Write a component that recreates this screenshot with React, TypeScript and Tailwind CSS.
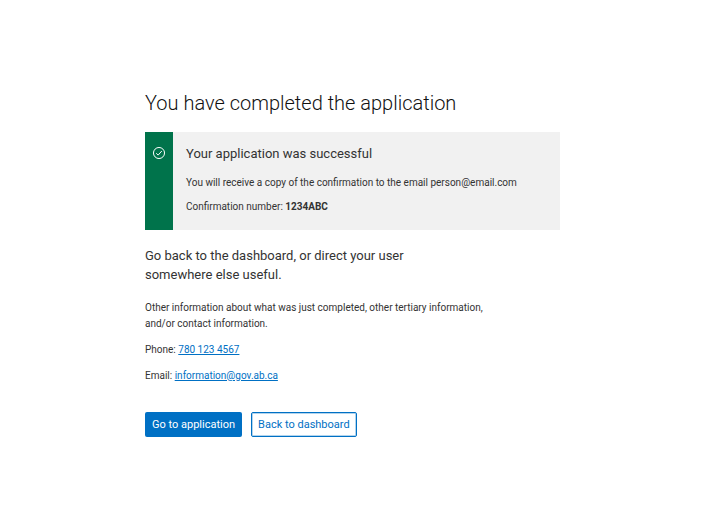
import React from "react";

function SuccessIcon() {
  return (
    <svg
      viewBox="0 0 24 24"
      className="size-[14px] text-white"
      fill="none"
      stroke="currentColor"
      strokeWidth="1.7"
      aria-hidden="true"
    >
      <circle cx="12" cy="12" r="9.5" />
      <path d="M7.3 12.4l3.2 3.2 6.3-7" />
    </svg>
  );
}

function SuccessCallout() {
  return (
    <section className="mt-3.5 flex bg-[#f1f1f1]">
      <div className="flex w-7 shrink-0 justify-center bg-[#00734b] pt-3.5">
        <SuccessIcon />
      </div>
      <div className="px-[13px] pt-3 pb-[15px]">
        <h2 className="text-[13px] leading-[19px]">Your application was successful</h2>
        <p className="mt-3 text-[10px] leading-4">
          You will receive a copy of the confirmation to the email person@email.com
        </p>
        <p className="mt-2 text-[10px] leading-4">
          Confirmation number: <strong className="font-bold">1234ABC</strong>
        </p>
      </div>
    </section>
  );
}

export default function App() {
  return (
    <main className="min-h-screen bg-white px-6 pt-[89px] pb-16 font-[Roboto,'Liberation_Sans',sans-serif] font-normal text-[#333333] sm:pr-[155px] sm:pl-[145px]">
      <h1 className="text-[20px] leading-[29px] font-light text-[#111111]">You have completed the application</h1>
      <SuccessCallout />
      <h3 className="mt-4 max-w-[290px] text-[13px] leading-[19px]">
        Go back to the dashboard, or direct your user somewhere else useful.
      </h3>
      <p className="mt-4 max-w-[350px] text-[10px] leading-4">
        Other information about what was just completed, other tertiary information, and/or contact information.
      </p>
      <p className="mt-2.5 text-[10px] leading-4">
        Phone:{" "}
        <a href="tel:7801234567" className="text-[#0070c4] underline underline-offset-1">
          780 123 4567
        </a>
      </p>
      <p className="mt-2.5 text-[10px] leading-4">
        Email:{" "}
        <a href="mailto:information@gov.ab.ca" className="text-[#0070c4] underline underline-offset-1">
          information@gov.ab.ca
        </a>
      </p>
      <div className="mt-7 flex flex-wrap gap-[9px] text-[11px] leading-4">
        <button type="button" className="h-[25px] rounded-[2px] bg-[#0070c4] px-[7px] text-white">
          Go to application
        </button>
        <button
          type="button"
          className="h-[25px] rounded-[2px] border border-[#0070c4] bg-white px-1.5 text-[#0070c4] ring-1 ring-[#0070c4]/30 ring-inset"
        >
          Back to dashboard
        </button>
      </div>
    </main>
  );
}
